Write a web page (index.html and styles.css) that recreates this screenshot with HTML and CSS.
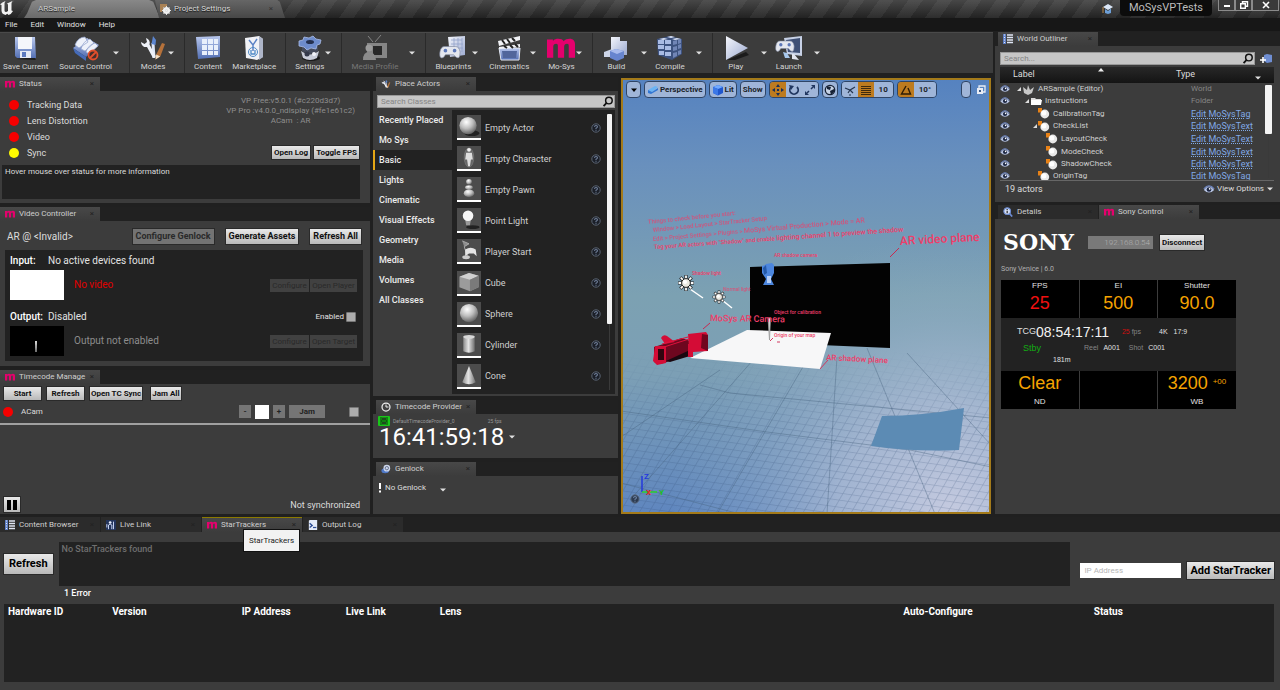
FILE: index.html
```html
<!DOCTYPE html>
<html lang="en">
<head>
<meta charset="utf-8">
<title>ARSample - Unreal Editor</title>
<meta name="viewport" content="width=device-width, initial-scale=1">
<link rel="stylesheet" href="styles.css">
</head>
<body>
<svg class="defs" aria-hidden="true">
  <defs>
    <linearGradient id="gBlue" x1="0" y1="0" x2="0" y2="1"><stop offset="0" stop-color="#b9c8ee"/><stop offset="1" stop-color="#5470b4"/></linearGradient>
    <linearGradient id="gPale" x1="0" y1="0" x2="1" y2="1"><stop offset="0" stop-color="#f4f6fc"/><stop offset="1" stop-color="#9caad0"/></linearGradient>
    <linearGradient id="gCyl" x1="0" y1="0" x2="1" y2="0"><stop offset="0" stop-color="#8a8a8a"/><stop offset=".45" stop-color="#e4e4e4"/><stop offset="1" stop-color="#6e6e6e"/></linearGradient>
    <radialGradient id="gBall" cx=".4" cy=".3" r=".75"><stop offset="0" stop-color="#ffffff"/><stop offset=".5" stop-color="#bdbdbd"/><stop offset="1" stop-color="#595959"/></radialGradient>
    <symbol id="m" viewBox="0 0 26 18"><path fill="#e5006d" d="M0 1h5.500v1.400C7 1 8.500.5 10.500.5c2.300 0 4 .7 5 2.300C17 1.200 18.800.5 21 .5c3.200 0 5 2 5 5.200V18h-5.800V7.200c0-1.500-.4-2.200-1.600-2.200-1.700 0-2.700 1-2.700 2.800V18h-5.800V7.200C10.100 5.700 9.600 5 8.500 5 6.800 5 5.800 6 5.800 7.800V18H0z"/></symbol>
    <symbol id="caret" viewBox="0 0 8 8"><path fill="#e0e0e0" d="M1 2.500h6L4 5.500z"/></symbol>
    <symbol id="search" viewBox="0 0 12 12"><circle cx="7" cy="5" r="3.600" fill="none" stroke="#111" stroke-width="1.600"/><path d="M4.500 7.500L1.200 11" stroke="#111" stroke-width="2"/></symbol>
    <symbol id="eye" viewBox="0 0 10 8"><path d="M.4 4.400Q5-2 9.600 4.400 5 9 .4 4.400z" fill="#b8c5e4"/><circle cx="5" cy="4" r="2.100" fill="#1c2540"/><circle cx="5.600" cy="3.400" r=".8" fill="#fff"/><path d="M.4 3.400Q5-2 9.600 3.400" fill="none" stroke="#6d86c4"/></symbol>
    <symbol id="actor" viewBox="0 0 12 11"><rect x="0" y="0" width="4" height="4.500" fill="#e88217"/><circle cx="6.800" cy="6" r="4.400" fill="#e8e8e8"/><circle cx="5.800" cy="5" r="2.500" fill="#fff"/></symbol>
    <symbol id="help" viewBox="0 0 10 10"><circle cx="5" cy="5" r="4.200" fill="#1b1f28" stroke="#5a6472"/><path d="M3.500 3.900Q3.600 2.500 5 2.500T6.500 3.800Q6.500 4.600 5 5.300V6M5 6.800v1" fill="none" stroke="#71809a" stroke-width="1.100"/></symbol>
    <symbol id="tools" viewBox="0 0 28 26"><path d="M15 23L14 8" stroke="#dfe6f5" stroke-width="3"/><path d="M12.500 9L14 1l3 4-.5 5z" fill="#5b85d0"/><path d="M2 7a5 5 0 0 0 6 5l6 11 3-1.500L10.500 9.500A5 5 0 0 0 7 3l1 4-2.500 2z" fill="#eef1f8"/><path d="M17 20l6-12 3 1-4.500 12-5 3.500z" fill="#b5713a"/><path d="M16.500 24.500l.8-5 4 2z" fill="#f3dfc4"/></symbol>
    <symbol id="pad" viewBox="0 0 24 14"><path d="M6 1Q2 1 1 7T3 13.500Q5 14 7 10h9q3 4 5 3.500T23 7Q22 1 18 1z" fill="#e3e6ee" stroke="#7d879e" stroke-width=".7"/><circle cx="7" cy="5.500" r="2" fill="#5c77b8"/><circle cx="17" cy="5.500" r="2" fill="#5c77b8"/></symbol>
    <symbol id="list" viewBox="0 0 10 10"><path d="M0 0h3v10H0z" fill="#5f7fc6"/><path d="M4 1h6M4 3.500h6M4 6h6M4 8.500h6" stroke="#dfe5f4" stroke-width="1.300"/><path d="M1 1h1M1 3.500h1M1 6h1M1 8.500h1" stroke="#e8edf8"/></symbol>
  </defs>
</svg>

<div class="app">
  <header class="titlebar">
    <svg class="ue-logo" viewBox="0 0 14 16"><path fill="#f2f2f2" d="M0 4.500Q2 2 5.500 1L4.500 3v7.500q0 1.500 1.800 1.500l1.700-1V4.500L7 3.500 12.500 1l-1 2v7.500l1.500.5Q11.500 14 8.500 15l-1.200-1.200L5.500 15Q1.500 14 1.500 10.500V5z"/></svg>
    <a class="wtab wtab-active" href="#level">ARSample</a>
    <a class="wtab wtab-settings" href="#project"><svg viewBox="0 0 12 12"><path d="M1 1h7v3H5l-2 5H1z" fill="#a98256"/><circle cx="7.500" cy="7.500" r="2.600" fill="none" stroke="#f0f0f0" stroke-width="2"/><path d="M7.500 3v9M3 7.500h9M4.500 4.500l6 6M10.500 4.500l-6 6" stroke="#f0f0f0" stroke-width=".9"/></svg>Project Settings<span class="wtab-x">×</span></a>
    <div class="title-right">
      <svg class="cap" viewBox="0 0 12 12"><path d="M1 4l5-3 5 3-5 3z" fill="#dbe6f6"/><path d="M3 6v4l3 1 3-1V5.500L6 8z" fill="#6ea0d8"/><path d="M1 4v6" stroke="#b98a4c"/></svg>
      <span class="project">MoSysVPTests</span>
      <div class="winbtns">
        <button aria-label="Minimize"><svg viewBox="0 0 10 8"><path d="M2 5h6" stroke="#fff" stroke-width="2"/></svg></button>
        <button aria-label="Restore"><svg viewBox="0 0 10 8"><path d="M3.500 2V.7h5v4.600H7M1.700 2.700h4.600v4.600H1.700z" fill="none" stroke="#fff" stroke-width="1.400"/></svg></button>
        <button aria-label="Close"><svg viewBox="0 0 10 8"><path d="M2 1l6 6M8 1L2 7" stroke="#fff" stroke-width="1.600"/></svg></button>
      </div>
    </div>
  </header>

  <nav class="menubar">
    <button>File</button><button>Edit</button><button>Window</button><button>Help</button>
  </nav>

  <main class="workspace">
    <div class="main-left">
      <div class="toolbar">
        <div class="tgroup tgroup-first">
          <button class="tool"><svg viewBox="0 0 28 26"><path d="M4 24l20 1-2-3z" fill="#1d1d1d"/><path d="M3 2h20l1 21H5l-2-2z" fill="url(#gBlue)"/><path d="M6 2h14v12H6z" fill="#f4f6fb"/><path d="M8 16h11v7H8z" fill="#e4e9f5"/><path d="M10 17h4v5h-4z" fill="#5b79bf"/></svg>Save Current</button>
          <button class="tool"><svg viewBox="0 0 28 26"><path d="M1 13L15 3l12 7-13 12z" fill="url(#gBlue)"/><path d="M3 10Q6 2 13 2l3 5-9 6zM9 14Q11 6 18 4l4 4-9 8zM14 17Q16 10 23 8l3 3-9 8z" fill="#edf1fa" stroke="#8fa0cc" stroke-width=".7"/><path d="M1 13l13 9v4L3 18z" fill="#456bb9"/><circle cx="21" cy="20" r="4.500" fill="#44302d" stroke="#e34f2c" stroke-width="1.800"/><path d="M18 23l6-6" stroke="#e34f2c" stroke-width="1.800"/></svg>Source Control</button>
          <svg class="caret"><use href="#caret"/></svg>
        </div>
        <div class="tgroup">
          <button class="tool"><svg><use href="#tools"/></svg>Modes</button><svg class="caret"><use href="#caret"/></svg>
        </div>
        <div class="tgroup gap-tools">
          <button class="tool"><svg viewBox="0 0 28 26"><path d="M2 2l24-1v21L4 24z" fill="url(#gBlue)"/><path d="M8 4h5v5H8zM14 4h5v5h-5zM20 4h4v5h-4zM8 10h5v5H8zM14 10h5v5h-5zM20 10h4v5h-4zM8 16h5v4H8zM14 16h5v4h-5zM20 16h4v4h-4z" fill="#e9effb"/></svg>Content</button>
          <button class="tool"><svg viewBox="0 0 28 26"><path d="M5 3l14-2 4 3v18l-6 3-11-2z" fill="#f1f2f6"/><path d="M19 1l4 3v18l-4 3z" fill="#aeb5c8"/><path d="M9 5l4 5 4-6M13 10v6" fill="none" stroke="#5c83c5" stroke-width="1.500"/><circle cx="13" cy="17" r="4.500" fill="none" stroke="#4f8ac7"/><path d="M11 15v4h4v-4" fill="none" stroke="#4f8ac7" stroke-width="1.300"/></svg>Marketplace</button>
        </div>
        <div class="tgroup">
          <button class="tool"><svg viewBox="0 0 28 26"><ellipse cx="15" cy="23" rx="9" ry="3" fill="#191919"/><path d="M5 16q9 7 18 0l-2 7q-7 4-14 0z" fill="#c9cdd9"/><path d="M6 11q8 6 16 0v5q-8 6-16 0z" fill="#454b5b"/><path d="M3 6l4-1 1-3 5 1 4-2 3 3 5 1-1 4-3 1-1 4-5-1-4 2-3-3-5-1z" fill="#6e8ccb" stroke="#a9bce8" stroke-width=".8"/><ellipse cx="14" cy="7" rx="4" ry="2" fill="#24304e"/><circle cx="11" cy="19" r="2.500" fill="#34394a"/><circle cx="18" cy="19" r="2" fill="#f2f4f9"/></svg>Settings</button><svg class="caret"><use href="#caret"/></svg>
        </div>
        <div class="tgroup caret-wide">
          <button class="tool" disabled><svg viewBox="0 0 28 26"><path d="M7 1l5 6M20 0l-6 7" stroke="#858585"/><path d="M6 8h20v15H6z" fill="#858585"/><path d="M12 11h9v9h-9z" fill="#282828"/><circle cx="8" cy="13" r="3.500" fill="#9b9b9b"/><path d="M2 25q0-8 6-8t7 8z" fill="#8b8b8b"/></svg>Media Profile</button><svg class="caret"><use href="#caret"/></svg>
        </div>
        <div class="tgroup gap-tools">
          <button class="tool"><svg viewBox="0 0 28 26"><path d="M9 2l17-1v19L11 22z" fill="url(#gPale)"/><path d="M12 5h11M12 9h12M12 13h12M15 3v14M19 3v14M23 3v14" stroke="#92a2ca" stroke-width=".8"/><use href="#pad" x="0" y="10" width="22" height="14"/></svg>Blueprints</button><svg class="caret"><use href="#caret"/></svg>
          <button class="tool"><svg viewBox="0 0 28 26"><path d="M4 13h21l-1 12H6z" fill="url(#gBlue)" stroke="#e5e9f3"/><path d="M7 16h15l-1 7H8z" fill="#51669b"/><path d="M3 6L25 1v4L4 11zM4 12l21-3v3L4 14z" fill="#f1f2f6"/><path d="M7 5l3 4M12 4l3 4M17 3l3 3M9 11l3 2M15 10l3 3M20 9l3 3" stroke="#222" stroke-width="2"/></svg>Cinematics</button><svg class="caret"><use href="#caret"/></svg>
          <button class="tool"><svg><use href="#m"/></svg>Mo-Sys</button><svg class="caret"><use href="#caret"/></svg>
        </div>
        <div class="tgroup gap-tools caret-wide">
          <button class="tool"><svg viewBox="0 0 28 26"><path d="M9 2h9v16H9zM18 6h7v14h-7z" fill="url(#gPale)"/><path d="M2 17l8-3 5 3v5H2z" fill="#cdd5e8"/><path d="M8 16l6-2 8 2v7l-7 3-7-3z" fill="#6785cf"/><path d="M8 16l6-2 8 2-7 3z" fill="#a8bbed"/></svg>Build</button><svg class="caret"><use href="#caret"/></svg>
          <button class="tool"><svg viewBox="0 0 28 26"><path d="M1 4l13-3 12 3v15l-10 6L2 20z" fill="#3d527f"/><path d="M2 5h6v4H2zM9 5h6v4H9zM2 10h6v4H2zM9 11h6v4H9zM3 16h5v4H3zM9 17h6v4H9z" fill="#a9bbe3"/><path d="M17 6l4-1v4l-4 1zM22 5l3-1v4l-3 1zM17 12l4-1v4l-4 1zM22 10l3-1v4l-3 1zM17 18l4-1v4l-4 2zM22 16l3-1v4l-3 1z" fill="#7185b6"/><path d="M3 4l5-1 4 1-5 1zM11 2l4-1 4 1-4 1zM16 4l5-1 4 1-6 1z" fill="#dbe3f6"/></svg>Compile</button><svg class="caret"><use href="#caret"/></svg>
        </div>
        <div class="tgroup tgroup-last gap-tools caret-wide">
          <button class="tool"><svg viewBox="0 0 28 26"><path d="M5 25l19-8 3 3-14 5z" fill="#1b1b1b"/><path d="M4 1l22 12L4 25z" fill="url(#gPale)"/></svg>Play</button><svg class="caret"><use href="#caret"/></svg>
          <button class="tool"><svg viewBox="0 0 28 26"><path d="M9 3l18-2v20l-15-2z" fill="#c7d1e6"/><path d="M11 5l14-2v15l-12-1z" fill="#3f5075"/><path d="M17 19v5l7 1-5-6z" fill="#e3e6ef"/><use href="#pad" x="0" y="5" width="20" height="12"/><path d="M8 17l4 1 3 5h-5z" fill="#a8c8ec"/></svg>Launch</button><svg class="caret"><use href="#caret"/></svg>
        </div>
      </div>

      <div class="columns">
        <div class="col col-a">
          <section class="dock">
            <div class="tabs"><a class="tab" href="#status"><svg><use href="#m"/></svg>Status<i>×</i></a></div>
            <div class="panel status">
              <div class="status-top">
                <ul class="lights"><li><b class="dot"></b>Tracking Data</li><li><b class="dot"></b>Lens Distortion</li><li><b class="dot"></b>Video</li><li><b class="dot dot-yellow"></b>Sync</li></ul>
                <div class="status-side">
                  <p>VP Free:v5.0.1 (#c220d3d7)<br>VP Pro :v4.0.0_ndisplay (#fe1e61c2)<br>ACam&nbsp; : AR</p>
                  <div class="btnrow"><button class="btn">Open Log</button><button class="btn">Toggle FPS</button></div>
                </div>
              </div>
              <div class="hint">Hover mouse over status for more information</div>
            </div>
          </section>

          <section class="dock">
            <div class="tabs"><a class="tab" href="#video"><svg><use href="#m"/></svg>Video Controller<i>×</i></a></div>
            <div class="panel video">
              <div class="video-head"><span class="device">AR @ &lt;Invalid&gt;</span><button class="btn btn-9 btn-dim" disabled>Configure Genlock</button><button class="btn btn-9">Generate Assets</button><button class="btn btn-9">Refresh All</button></div>
              <div class="video-box">
                <div class="io-line"><strong>Input:</strong><span>No active devices found</span></div>
                <div class="io-body"><div class="thumb thumb-white"></div><span class="red">No video</span><div class="io-btns"><button disabled>Configure</button><button disabled>Open Player</button></div></div>
                <div class="io-line"><strong>Output:</strong><span>Disabled</span><label class="enabled">Enabled<input type="checkbox" class="check"></label></div>
                <div class="io-body"><div class="thumb"><svg viewBox="0 0 54 30"><path d="M25 15h2l-.5 11h-1z" fill="#d8d8d8"/></svg></div><span class="grey">Output not enabled</span><div class="io-btns"><button disabled>Configure</button><button disabled>Open Target</button></div></div>
              </div>
            </div>
          </section>

          <section class="dock dock-grow">
            <div class="tabs"><a class="tab" href="#timecode"><svg><use href="#m"/></svg>Timecode Manage<i>×</i></a></div>
            <div class="panel tcm">
              <div class="tcm-btns"><button class="btn wide">Start</button><button class="btn wide">Refresh</button><button class="btn">Open TC Sync</button><button class="btn last">Jam All</button></div>
              <div class="tcm-row"><b class="dot"></b><label for="jamval">ACam</label><button class="sq">-</button><input id="jamval" type="text"><button class="sq">+</button><button class="jam">Jam</button><input type="checkbox" class="check" aria-label="Select ACam"></div>
              <div class="tcm-foot"><button class="btn pause" aria-label="Pause"><svg viewBox="0 0 12 12"><path d="M1 1h4v10H1zM7 1h4v10H7z"/></svg></button><span>Not synchronized</span></div>
            </div>
          </section>
        </div>

        <div class="col col-b">
          <section class="dock dock-grow">
            <div class="tabs tabs-in"><a class="tab" href="#place"><svg viewBox="0 0 28 26"><use href="#tools"/></svg>Place Actors<i>×</i></a></div>
            <div class="panel place">
              <div class="search"><input type="text" placeholder="Search Classes" aria-label="Search Classes"><svg><use href="#search"/></svg></div>
              <div class="place-body">
                <div class="cats"><button>Recently Placed</button><button>Mo Sys</button><button class="on">Basic</button><button>Lights</button><button>Cinematic</button><button>Visual Effects</button><button>Geometry</button><button>Media</button><button>Volumes</button><button>All Classes</button></div>
                <div class="assets">
                  <ul>
                    <li><svg class="th" viewBox="0 0 24 24"><ellipse cx="15" cy="19" rx="8" ry="3" fill="#222"/><circle cx="11" cy="11" r="9" fill="url(#gBall)"/></svg>Empty Actor<svg class="q"><use href="#help"/></svg></li>
                    <li><svg class="th" viewBox="0 0 24 24"><ellipse cx="12" cy="12" rx="5" ry="10" fill="#666" stroke="#888" stroke-width=".5"/><circle cx="12" cy="4" r="2" fill="#eee"/><path d="M9 7h6l1 7h-2l-1 7h-2l-1-7H8z" fill="#ddd"/></svg>Empty Character<svg class="q"><use href="#help"/></svg></li>
                    <li><svg class="th" viewBox="0 0 24 24"><circle cx="12" cy="5" r="3" fill="url(#gBall)"/><ellipse cx="12" cy="11" rx="4" ry="2.500" fill="url(#gBall)"/><ellipse cx="12" cy="17" rx="5.500" ry="4" fill="url(#gBall)"/></svg>Empty Pawn<svg class="q"><use href="#help"/></svg></li>
                    <li><svg class="th" viewBox="0 0 24 24"><ellipse cx="16" cy="20" rx="7" ry="2" fill="#222"/><path d="M8 12h6l-1 6h-4z" fill="#999"/><circle cx="11" cy="8" r="5.500" fill="#f7f7f7"/></svg>Point Light<svg class="q"><use href="#help"/></svg></li>
                    <li><svg class="th" viewBox="0 0 24 24"><path d="M5 2l7 3-5 3 4 12" fill="#8d8d8d" stroke="#aaa"/><path d="M8 11q6-4 11 0l1 7-3-3h-5l-4 3z" fill="#e4e4e4"/><ellipse cx="9" cy="19" rx="4" ry="2" fill="#ccc"/></svg>Player Start<svg class="q"><use href="#help"/></svg></li>
                    <li><svg class="th" viewBox="0 0 24 24"><path d="M2 6l10-4 10 3v12l-9 4-11-4z" fill="#9b9b9b"/><path d="M2 6l10-4 10 3-9 4z" fill="#d0d0d0"/><path d="M13 9l9-4v12l-9 4z" fill="#7a7a7a"/></svg>Cube<svg class="q"><use href="#help"/></svg></li>
                    <li><svg class="th" viewBox="0 0 24 24"><circle cx="12" cy="11.500" r="9.500" fill="url(#gBall)"/></svg>Sphere<svg class="q"><use href="#help"/></svg></li>
                    <li><svg class="th" viewBox="0 0 24 24"><path d="M6 4v15q6 3 12 0V4z" fill="url(#gCyl)"/><ellipse cx="12" cy="4" rx="6" ry="2" fill="#d8d8d8"/></svg>Cylinder<svg class="q"><use href="#help"/></svg></li>
                    <li><svg class="th" viewBox="0 0 24 24"><path d="M12 2l7 17q-7 4-14 0z" fill="url(#gCyl)"/></svg>Cone<svg class="q"><use href="#help"/></svg></li>
                  </ul>
                  <div class="vbar"><div class="vthumb"></div></div>
                </div>
              </div>
            </div>
          </section>
          <section class="dock">
            <div class="tabs tabs-in"><a class="tab" href="#tcp"><svg viewBox="0 0 12 12"><circle cx="6" cy="6" r="4.800" fill="none" stroke="#eee" stroke-width="1.500"/><path d="M6 3v3h3" fill="none" stroke="#eee" stroke-width="1.200"/></svg>Timecode Provider<i>×</i></a></div>
            <div class="panel tcp">
              <div class="tcp-top"><svg viewBox="0 0 12 10"><rect width="12" height="10" rx="1" fill="#19c619"/><path d="M3 1v8M9 1v8M3 5h6" stroke="#0b3d0b" stroke-width="1"/><path d="M4 1.500h4v2.500H4zM4 6h4v2.500H4z" fill="#1d4a1d"/></svg><span>DefaultTimecodeProvider_0</span><span>25 fps</span></div>
              <div class="tcp-time">16:41:59:18<svg class="caret"><use href="#caret"/></svg></div>
            </div>
          </section>
          <section class="dock">
            <div class="tabs tabs-in"><a class="tab" href="#genlock"><svg viewBox="0 0 12 12"><ellipse cx="5" cy="8" rx="4.500" ry="3" fill="#4f79c9"/><circle cx="7" cy="5" r="4" fill="#cdd6ea"/><circle cx="7" cy="5" r="2" fill="none" stroke="#55627f"/></svg>Genlock<i>×</i></a></div>
            <div class="panel genlock"><svg class="bang" viewBox="0 0 4 10"><path d="M1 0h2v6H1zM1 7.500h2v2H1z" fill="#fff"/></svg>No Genlock<svg class="caret"><use href="#caret"/></svg></div>
          </section>
        </div>

        <section class="viewport">
          <svg class="scene" viewBox="621 78 370 436" preserveAspectRatio="xMidYMid slice">
            <defs>
              <linearGradient id="sky" x1="0" y1="0" x2="0" y2="1"><stop offset="0" stop-color="#5582c0"/><stop offset=".2" stop-color="#6990bd"/><stop offset=".5" stop-color="#7ca1b2"/><stop offset=".68" stop-color="#7c9fb5"/><stop offset="1" stop-color="#5f86bf"/></linearGradient>
              <radialGradient id="glow" gradientUnits="userSpaceOnUse" cx="950" cy="515" r="280"><stop offset="0" stop-color="#c6cbe0"/><stop offset=".4" stop-color="#b0bed6" stop-opacity=".8"/><stop offset=".7" stop-color="#9db4cc" stop-opacity=".35"/><stop offset="1" stop-color="#8dabc2" stop-opacity="0"/></radialGradient>
              <pattern id="fine" width="9" height="7" patternUnits="userSpaceOnUse" patternTransform="rotate(8) skewX(-22)"><path d="M0 .5h9M.5 0v7" stroke="#2f4a70" stroke-width=".6" fill="none"/></pattern>
              <linearGradient id="fade" x1="0" y1="0" x2="0" y2="1"><stop offset="0" stop-color="#000"/><stop offset=".5" stop-color="#fff"/></linearGradient>
              <mask id="floor"><rect x="621" y="350" width="370" height="164" fill="url(#fade)"/></mask>
              <g id="sun"><g stroke="#222" stroke-width="3.200"><path d="M0-8V8M-8 0H8M-5.700-5.700L5.700 5.700M5.700-5.700L-5.700 5.700"/></g><g stroke="#fff" stroke-width="1.800"><path d="M0-7.500V7.500M-7.500 0H7.500M-5.300-5.300L5.300 5.300M5.300-5.300L-5.300 5.300"/></g><circle r="4.400" fill="#e8e8e0" stroke="#222"/><circle r="2" cx="-1" cy="-1" fill="#fff"/></g>
            </defs>
            <rect x="621" y="78" width="370" height="436" fill="url(#sky)"/>
            <rect x="621" y="235" width="370" height="279" fill="url(#glow)"/>
            <rect x="621" y="350" width="370" height="164" fill="url(#fine)" opacity=".3" mask="url(#floor)"/>
            <g fill="none" stroke="#46617c" stroke-width=".8" opacity=".5"><path d="M837 357L827 514M807 360L717 514M753 360L630 500M867 348L935 514M907 353L991 445M720 370L621 437M621 411L767 432 910 450 991 467M700 385L730 393 991 418M621 483L740 514"/></g>
            <path d="M882 416q40 0 82-8l-5 42q-46 2-88-4z" fill="#5c8bb4"/>
            <path d="M750 267L890 263V348L750 342z" fill="#030303"/>
            <path d="M747 330L831 333 820 369 690 358z" fill="#f7f7f8"/>
            <path d="M820 369l8-9" stroke="#d33a60"/>
            <g fill="#d40c36"><path d="M654 347l28-9 8 3v13l-26 9q-9 2-10-2z" fill="#6e071f"/><path d="M655 346h11v17l-9 2-4-4z"/><path d="M658 349h6v11h-6z" fill="#31050f"/><path d="M688 334l18-2 2 3v16l-15 1-4-5z"/><path d="M702 334l6 1v16l-7-3z" fill="#71051e"/><path d="M661 338q2-4 6-2l8 6-10 2z"/><path d="M666 361l24-11v6l-20 6z" fill="#1a0810"/><path d="M688 344h5v13h-5z"/></g>
            <path d="M662 344l26-7M664 347l25-8" stroke="#e0113c" stroke-width="1"/>
            <path d="M768 318l1.500 22 1-22z" fill="#ddd" stroke="#999" stroke-width=".8"/><path d="M770 341l3-3M777 342h3" stroke="#d33a60"/>
            <path d="M703 329l7-6M890 257l9-9" stroke="#c8284f"/>
            <g fill="#4c86de"><path d="M766 264l6-1 2 2v8l-3 6 3 6h-11l3-6-4-6v-7l3-1z"/><path d="M767 276h4v7h-4z" fill="#b5cef7"/><path d="M763 268l3-3 1 8-3 2z" fill="#2459a8"/></g>
            <path d="M690 289l13 9M722 300l10 8" stroke="#fff" stroke-width="1.500"/>
            <use href="#sun" x="686" y="283"/><use href="#sun" x="719" y="297" transform="translate(719 297) scale(.8) translate(-719 -297)"/>
            <g class="scene-text">
              <text class="s6 soft" x="648" y="224" transform="rotate(-6 648 224)">Things to check before you start:</text>
              <text class="s6 soft" x="653" y="232" transform="rotate(-6 653 232)">Window &gt; Load Layout &gt; StarTracker Setup</text>
              <text class="s6 soft" x="653" y="241" transform="rotate(-5 653 241)">Edit &gt; Project Settings &gt; Plugins &gt; <tspan class="s7">MoSys Virtual Production &gt; Mode = AR</tspan></text>
              <text class="s6" x="654" y="249" transform="rotate(-4 654 249)">Tag your AR actors with "Shadow" and enable <tspan class="s7">lighting channel 1 to preview the shadow</tspan></text>
              <text class="s12" x="900" y="245" transform="rotate(-3 900 245)">AR video plane</text>
              <text class="s5" x="774" y="257">AR shadow camera</text>
              <text class="s5" x="692" y="275">Shadow light</text>
              <text class="s5 soft" x="723" y="291">Normal light</text>
              <text class="s5" x="774" y="314">Object for calibration</text>
              <text class="s9" x="710" y="321" transform="rotate(1 710 321)">MoSys AR Camera</text>
              <text class="s5" x="774" y="337">Origin of your map</text>
              <text class="s8" x="826" y="360" transform="rotate(3 826 360)">AR shadow plane</text>
            </g>
            <g class="axes"><path d="M642 492v-16" stroke="#2338dd" stroke-width="1.500"/><path d="M642 492h15" stroke="#2bd22b" stroke-width="1.500"/><text x="644" y="479" fill="#2338dd">Z</text><text x="646" y="495" fill="#e02525">X</text><text x="659" y="495" fill="#18c418">Y</text></g>
            <use href="#help" x="630" y="494" width="10" height="10" opacity=".7"/>
          </svg>
          <div class="vp-bar">
            <button class="chip" aria-label="Viewport options"><svg viewBox="0 0 8 8"><path d="M1 2.500h6l-3 3.500z"/></svg></button>
            <button class="chip"><svg viewBox="0 0 12 10"><path d="M1 5l7-4 3 1-6 5z" fill="#69b4f5"/><path d="M1 5l4 2 6-4v2L4 9 1 8z" fill="#3177d4"/></svg>Perspective</button>
            <button class="chip"><svg viewBox="0 0 12 12"><path d="M1 3l5-2 5 2v6l-5 2.500L1 9z" fill="#2057cd"/><path d="M1 3l5 2 5-2-5-2z" fill="#72a9ff"/><path d="M1 3l5 2v6.500L1 9z" fill="#3b78e8"/></svg>Lit</button>
            <button class="chip">Show</button>
            <div class="chip-group"><button class="chip on" aria-label="Move"><svg viewBox="0 0 12 12"><path d="M6 0l2 3H4zM6 12l2-3H4zM0 6l3-2v4zM12 6L9 4v4zM5 5h2v2H5z" fill="#172e59"/></svg></button><button class="chip" aria-label="Rotate"><svg viewBox="0 0 12 12"><path d="M3 3a4.200 4.200 0 1 0 6 0" fill="none" stroke="#20365f" stroke-width="1.800"/><path d="M1 1l5 1-3 4z" fill="#20365f"/></svg></button><button class="chip" aria-label="Scale"><svg viewBox="0 0 12 12"><path d="M7 1h4v4zM1 7v4h4z" fill="#20365f"/><path d="M3 9l2-2M7 5l2-2" stroke="#20365f" stroke-width="1.500"/></svg></button></div>
            <button class="chip" aria-label="World space"><svg viewBox="0 0 12 12"><circle cx="6" cy="6" r="4.700" fill="#c6d2e4" stroke="#172236" stroke-width="1.300"/><path d="M3 2l4 1-1 3-3-1zM6 7l4-2v3l-3 3z" fill="#172236"/></svg></button>
            <div class="chip-group"><button class="chip" aria-label="Surface snap"><svg viewBox="0 0 12 12"><path d="M1 4l5 2 5-3M6 6l-2 3M6 6l3 3M5 11h2" stroke="#26364f" fill="none" stroke-width="1.200"/></svg></button><button class="chip on" aria-label="Grid snap"><svg viewBox="0 0 12 12"><path d="M1 2.500h10M1 4.500h10M1 6.500h10M1 8.500h10M1 10.500h10" stroke="#3d2a0e" stroke-width="1.200"/></svg></button><button class="chip num">10</button></div>
            <div class="chip-group"><button class="chip on" aria-label="Angle snap"><svg viewBox="0 0 12 12"><path d="M6 2L1.500 10h9L8 4" fill="none" stroke="#2d1d06" stroke-width="1.400"/></svg></button><button class="chip num">10°</button></div>
            <button class="chip pill" aria-label="Camera speed"></button>
            <button class="maxi" aria-label="Maximize"><svg viewBox="0 0 10 10"><path d="M3 3V1h6v6H7" fill="none" stroke="#e9edf5" stroke-width="1.300"/><path d="M1 3h6v6H1z" fill="#e9edf5"/><path d="M3 5h2v2H3z" fill="#3c5a86"/></svg></button>
          </div>
        </section>
      </div>
    </div>

    <aside class="main-right">
      <section class="dock">
        <div class="tabs tabs-in"><a class="tab" href="#outliner"><svg><use href="#list"/></svg>World Outliner<i>×</i></a></div>
        <div class="panel outliner">
          <div class="ol-search"><div class="search"><input type="text" placeholder="Search..." aria-label="Search"><svg><use href="#search"/></svg></div><button aria-label="New folder"><svg viewBox="0 0 12 12"><path d="M4 2l3-1 5 1v7l-5 1-3-2z" fill="#6f8ed2"/><path d="M3 4v6M0 7h6" stroke="#fff" stroke-width="1.600"/></svg></button></div>
          <div class="ol-head"><span>Label</span><svg class="up" viewBox="0 0 8 6"><path d="M1 4.500h6L4 1z" fill="#eee"/></svg><span class="ty">Type</span><svg class="caret"><use href="#caret"/></svg></div>
          <div class="ol-list">
            <table>
              <tr><td><svg><use href="#eye"/></svg></td><td class="l0"><svg class="tri" viewBox="0 0 6 6"><path d="M5 1v4H1z"/></svg><svg class="ico" viewBox="0 0 12 11"><path d="M1 3l4 3 1-5 2 5 4-3-2 6-4 2-4-2z" fill="#c8c8c8"/></svg>ARSample (Editor)</td><td>World</td></tr>
              <tr><td><svg><use href="#eye"/></svg></td><td class="l1"><svg class="tri" viewBox="0 0 6 6"><path d="M5 1v4H1z"/></svg><svg class="ico" viewBox="0 0 12 11"><path d="M1 2h4l1 1h5v2H4L2 9H1z" fill="#ddd"/><path d="M1 4h11l-1 5H1z" fill="#fff"/></svg>Instructions</td><td>Folder</td></tr>
              <tr class="a"><td><svg><use href="#eye"/></svg></td><td class="l2"><svg class="ico"><use href="#actor"/></svg>CalibrationTag</td><td><a href="#tag">Edit MoSysTag</a></td></tr>
              <tr><td><svg><use href="#eye"/></svg></td><td class="l2 open"><svg class="tri" viewBox="0 0 6 6"><path d="M5 1v4H1z"/></svg><svg class="ico"><use href="#actor"/></svg>CheckList</td><td><a href="#text">Edit MoSysText</a></td></tr>
              <tr class="a"><td><svg><use href="#eye"/></svg></td><td class="l3"><svg class="ico"><use href="#actor"/></svg>LayoutCheck</td><td><a href="#text">Edit MoSysText</a></td></tr>
              <tr class="a"><td><svg><use href="#eye"/></svg></td><td class="l3"><svg class="ico"><use href="#actor"/></svg>ModeCheck</td><td><a href="#text">Edit MoSysText</a></td></tr>
              <tr><td><svg><use href="#eye"/></svg></td><td class="l3"><svg class="ico"><use href="#actor"/></svg>ShadowCheck</td><td><a href="#text">Edit MoSysText</a></td></tr>
              <tr><td><svg><use href="#eye"/></svg></td><td class="l2"><svg class="ico"><use href="#actor"/></svg>OriginTag</td><td><a href="#tag">Edit MoSysTag</a></td></tr>
            </table>
            <div class="vbar"><div class="vthumb"></div></div>
          </div>
          <div class="ol-foot"><span>19 actors</span><button><svg class="eye"><use href="#eye"/></svg>View Options<svg class="caret"><use href="#caret"/></svg></button></div>
        </div>
      </section>
      <section class="dock dock-grow">
        <div class="tabs tabs-in"><a class="tab off" href="#details"><svg viewBox="0 0 12 12"><circle cx="5" cy="5" r="4" fill="#d5def2" stroke="#6c8bd0" stroke-width="1.300"/><path d="M8 8l3 3.500" stroke="#6c8bd0" stroke-width="2"/><path d="M5 2.500v1M5 4.500v3" stroke="#222" stroke-width="1.400"/></svg>Details<i>×</i></a><a class="tab" href="#sony"><svg><use href="#m"/></svg>Sony Control<i>×</i></a></div>
        <div class="panel sony">
          <div class="sony-top"><span class="brand">SONY</span><input type="text" value="192.168.0.54" aria-label="Camera address" disabled><button class="btn btn-disc">Disconnect</button></div>
          <div class="model">Sony Venice | 6.0</div>
          <div class="cam">
            <div class="cell"><small>FPS</small><b class="r">25</b></div><div class="cell"><small>EI</small><b>500</b></div><div class="cell"><small>Shutter</small><b>90.0</b></div>
            <div class="cam-mid">
              <div class="mid-1"><span class="tcg">TCG</span><span class="tc">08:54:17:11</span><span class="f"><em>25</em> fps</span><span class="w">4K</span><span class="w">17:9</span></div>
              <div class="mid-2"><span class="stby">Stby</span><span class="g">Reel</span><span>A001</span><span class="g">Shot</span><span>C001</span></div>
              <div class="mid-3">181m</div>
            </div>
            <div class="cell"><b>Clear</b><small>ND</small></div><div class="cell"></div><div class="cell"><b>3200 <sup>+00</sup></b><small>WB</small></div>
          </div>
        </div>
      </section>
    </aside>
  </main>

  <section class="bottom">
    <div class="tabs">
      <a class="tab off" href="#content"><svg><use href="#list"/></svg>Content Browser<i>×</i></a>
      <a class="tab off" href="#livelink"><svg viewBox="0 0 12 12"><rect width="12" height="12" fill="#23345c"/><circle cx="5" cy="3" r="1.600" fill="#e9eefb"/><path d="M3 11V6l2-1 2 1v5M9 2v9M1 5v4" stroke="#c3d0ef" fill="none" stroke-width="1.200"/></svg>Live Link<i>×</i></a>
      <a class="tab hot" href="#startrackers"><svg><use href="#m"/></svg>StarTrackers<i>×</i><span class="tip" role="tooltip">StarTrackers</span></a>
      <a class="tab off" href="#log"><svg viewBox="0 0 12 12"><path d="M2 0h9v12H1V1z" fill="#e3eaf8"/><path d="M2 4l3 2.500L2 9" fill="none" stroke="#2b4c94" stroke-width="1.600"/><path d="M6 9h4" stroke="#2b4c94" stroke-width="1.500"/></svg>Output Log<i>×</i></a>
    </div>
    <div class="panel trackers">
      <div class="tr-top">
        <button class="btn btn-11">Refresh</button>
        <div class="tr-log">No StarTrackers found</div>
        <div class="tr-add"><input type="text" placeholder="IP Address" aria-label="IP Address"><button class="btn btn-11">Add StarTracker</button></div>
      </div>
      <div class="err">1 Error</div>
      <div class="tr-table">
        <table><thead><tr><th class="c1">Hardware ID</th><th class="c2">Version</th><th class="c3">IP Address</th><th class="c4">Live Link</th><th class="c5">Lens</th><th class="c6">Auto-Configure</th><th>Status</th></tr></thead></table>
      </div>
    </div>
  </section>
</div>
</body>
</html>
```

FILE: styles.css
```css
* { box-sizing: border-box; }
body { margin: 0; background: #202020; color: #dcdcdc; font: 8px/12px Roboto, "Noto Sans", sans-serif; }
button, input { font: inherit; color: inherit; margin: 0; padding: 0; border: 0; background: none; border-radius: 0; }
button { cursor: pointer; white-space: nowrap; }
a { color: inherit; text-decoration: none; }
ul { list-style: none; margin: 0; padding: 0; }
p { margin: 0; }
svg { display: block; flex: none; }
.defs { position: absolute; width: 0; height: 0; }
.app { min-height: 100vh; display: flex; flex-direction: column; }

/* title bar */
.titlebar { display: flex; height: 18px; background: repeating-linear-gradient(125deg, rgba(255,255,255,.05) 0 12px, transparent 12px 24px), linear-gradient(#474747, #222); }
.ue-logo { width: 14px; height: 16px; margin-right: 10px; }
.wtab { display: flex; align-items: center; height: 18px; text-shadow: 0 1px 1px #111; }
.wtab-active { width: 136px; padding-left: 14px; color: #d0d0d0; background: linear-gradient(#888, #6a6a6a); clip-path: polygon(0 100%, 3px 75%, 8px 10%, 12px 0, 92% 0, 95% 10%, 100% 100%); }
.wtab-settings { width: 130px; margin-left: -5px; padding-left: 4px; gap: 3px; color: #d8d8d8; background: linear-gradient(#666, #474747); clip-path: polygon(0 0, 94% 0, 96% 10%, 100% 100%, 4px 100%); }
.wtab-settings svg { width: 12px; height: 12px; }
.wtab-x { margin-left: auto; margin-right: 12px; color: #333; text-shadow: none; }
.title-right { margin-left: auto; display: flex; gap: 6px; }
.cap { width: 12px; height: 12px; margin-top: 3px; }
.project { height: 16px; padding: 0 9px; font-size: 11px; line-height: 16px; color: #bdbdbd; background: #0c0c0c; border-radius: 0 0 4px 4px; }
.winbtns { display: flex; height: 11px; margin-right: 1px; }
.winbtns button { width: 17px; border: 1px solid #8a8a8a; border-top: 0; background: #3a3a3a; display: grid; place-items: center; }
.winbtns button:last-child { width: 27px; }
.winbtns svg { width: 10px; height: 8px; }

.menubar { display: flex; height: 13px; padding-left: 5px; gap: 13px; background: #171717; color: #e0e0e0; }

.workspace { flex: 1; display: grid; grid-template-columns: 993fr 285fr; gap: 2px; padding-top: 1px; }
.main-left, .main-right { min-width: 0; display: flex; flex-direction: column; }

/* toolbar */
.toolbar { display: flex; height: 41px; background: #3c3c3c; border-top: 1px solid #4a4a4a; }
.tgroup { display: flex; align-items: center; padding: 0 9px; border-right: 1px solid #2a2a2a; }
.tgroup-first { padding-left: 3px; }
.tgroup-first .tool + .tool { margin-left: 11px; }
.tgroup-last { border: 0; }
.tool { display: flex; flex-direction: column; align-items: center; color: #d4d4d4; line-height: 11px; }
.tool svg { width: 28px; height: 26px; }
.tool:disabled { color: #777; }
.caret { width: 8px; height: 8px; }
.gap-tools .tool ~ .tool { margin-left: 10px; }
.caret-wide .caret { margin-left: 10px; }
.gap-tools.caret-wide .tool ~ .tool { margin-left: 7px; }

/* docks */
.columns { flex: 1; display: grid; grid-template-columns: 370fr 245fr 370fr; gap: 3px; padding: 4px 2px 0 0; }
.col { min-width: 0; display: flex; flex-direction: column; gap: 4px; }
.dock { display: flex; flex-direction: column; min-width: 0; }
.dock-grow { flex: 1; }
.tabs { display: flex; gap: 1px; background: #212121; }
.tabs-in { padding-left: 3px; }
.tab { position: relative; display: flex; align-items: center; gap: 4px; width: 100px; height: 14px; padding: 0 6px 0 5px; color: #cfcfcf; background: linear-gradient(#484848, #3c3c3c); white-space: nowrap; }
.tab svg { width: 10px; height: 10px; }
.tab i { margin-left: auto; font-style: normal; color: #222; }
.tab.off { background: #2b2b2b; }
.panel { flex: 1; background: #3c3c3c; }

.btn { font-weight: 700; color: #111; background: linear-gradient(#e9e9e9, #b9b9b9); box-shadow: 0 0 0 1px #2a2a2a; padding: 0 2px; height: 13px; line-height: 13px; }
.btn-9 { font-size: 9px; height: 15px; line-height: 15px; padding: 0 3px; }
.btn-dim { background: #737373; color: #2a2a2a; }
.btn-11 { font-size: 11px; height: 20px; line-height: 20px; padding: 0 6px; color: #000; }
.btnrow { display: flex; gap: 4px; }
.dot { width: 10px; height: 10px; border-radius: 50%; background: #f60000; }
.dot-yellow { background: #fffb00; }
.check { appearance: none; width: 10px; height: 10px; background: #acacac; border: 1px solid #777; border-radius: 1px; }

/* status */
.status { padding: 6px 10px 4px 2px; }
.status-top { display: flex; justify-content: space-between; font-size: 9px; }
.lights { padding-left: 7px; }
.lights li { display: flex; align-items: center; gap: 8px; height: 16px; }
.status-side { display: flex; flex-direction: column; align-items: flex-end; justify-content: space-between; padding: 0 1px 2px 0; }
.status-side p { text-align: center; font-size: 8px; line-height: 10px; color: #8e8e8e; padding-right: 4px; align-self: center; margin-top: -1px; }
.status-side .btnrow { font-size: 8px; }
.hint { height: 34px; margin-top: 4px; padding: 1px 3px; background: #222; font-size: 8px; }

/* video controller */
.video { padding: 8px 7px 5px 5px; }
.video-head { display: flex; align-items: center; padding: 0 2px; gap: 12px; }
.device { font-size: 10px; margin-right: auto; }
.video-box { margin-top: 6px; padding: 5px 6px 5px 5px; background: #222; font-size: 10px; color: #e2e2e2; }
.io-line { display: flex; align-items: center; height: 12px; margin-bottom: 3px; }
.io-line strong { width: 38px; color: #fff; font-weight: 500; }
.io-body { display: flex; align-items: center; gap: 10px; height: 30px; }
.io-body + .io-line { margin-top: 11px; }
.thumb { width: 54px; height: 30px; background: #000; }
.thumb-white { background: #fff; }
.red { color: #e00000; }
.grey { color: #8d8d8d; }
.enabled { margin-left: auto; display: flex; align-items: center; gap: 2px; font-size: 8px; padding-right: 1px; }
.io-btns { margin-left: auto; display: flex; gap: 1px; font-size: 8px; }
.io-btns button { width: 39px; height: 13px; background: #414141; color: #292929; line-height: 13px; }
.io-btns button:last-child { width: 47px; }

/* timecode manager */
.tcm { display: flex; flex-direction: column; padding: 3px 0 2px; }
.tcm-btns { display: flex; gap: 6px; padding-left: 4px; }
.tcm-btns .btn { padding: 0 1px; }
.tcm-btns .wide { width: 37px; }
.tcm-btns .last { margin-left: 3px; }
.tcm-row { display: flex; align-items: center; height: 25px; padding: 0 11px 0 3px; gap: 4px; border-bottom: 2px solid #a0a0a0; }
.tcm-row label { margin: 0 auto 0 4px; }
.tcm-row input[type=text] { width: 14px; height: 14px; background: #fff; color: #111; }
.tcm-row button { height: 13px; background: #757575; color: #222; font-weight: 700; }
.sq { width: 12px; }
.jam { width: 36px; }
.tcm-row .check { margin-left: 20px; }
.tcm-foot { margin-top: auto; display: flex; justify-content: space-between; align-items: center; padding: 0 10px 0 4px; font-size: 9px; }
.pause { height: 15px; }
.pause svg { width: 12px; height: 12px; }

/* place actors */
.search { display: flex; align-items: center; height: 13px; background: #c6c6c6; border: 1px solid #999; }
.search input { flex: 1; min-width: 0; padding-left: 3px; color: #222; outline: 0; }
.search input::placeholder { color: #858585; opacity: 1; }
.search svg { width: 12px; height: 11px; }
.place { display: flex; flex-direction: column; padding: 4px 3px 2px 0; }
.place .search { margin-left: 4px; }
.place-body { flex: 1; display: flex; margin-top: 2px; }
.cats { width: 79px; display: flex; flex-direction: column; }
.cats button { height: 20px; padding-left: 4px; text-align: left; font-size: 9px; font-weight: 500; color: #ececec; border-left: 2px solid transparent; }
.cats .on { background: #222; border-color: #e3a616; }
.assets { flex: 1; display: flex; background: #222; padding: 2px; }
.assets ul { flex: 1; display: flex; flex-direction: column; padding: 0 5px 0 3px; }
.assets li { flex: 1; display: flex; align-items: center; gap: 4px; font-size: 9px; color: #d0d0d0; }
.th { width: 24px; height: 25px; background: #4c4c4c; border-bottom: 2px solid #fff; }
.q { width: 10px; height: 10px; margin-left: auto; }
.vbar { width: 5px; margin: 2px 1px; background: linear-gradient(90deg, transparent 40%, #3a3a3a 40% 60%, transparent 60%); }
.vthumb { height: 76%; background: #f4f4f4; border-radius: 1px; }

.panel.tcp { flex: none; height: 44px; padding: 2px 5px; }
.tcp-top { display: flex; align-items: center; gap: 3px; height: 10px; font-size: 5px; color: #9a9a9a; }
.tcp-top svg { width: 12px; height: 10px; }
.tcp-top span:last-child { margin-left: 30px; }
.tcp-time { display: flex; align-items: center; gap: 4px; padding-left: 1px; font-size: 24px; line-height: 22px; color: #fff; }
.panel.genlock { flex: none; display: flex; align-items: flex-start; height: 38px; padding: 6px 5px; }
.bang { width: 4px; height: 10px; margin: 1px 3px 0 0; }
.genlock .caret { margin: 4px 0 0 13px; }

/* viewport */
.viewport { position: relative; border: 2px solid #a37a1a; min-width: 0; overflow: hidden; background: #7ca1b2; margin-top: 1px; }
.scene { position: absolute; inset: -2px; width: calc(100% + 4px); height: calc(100% + 4px); }
.scene-text { fill: #ee3e69; font-weight: 500; }
.soft { opacity: .75; }
.s5 { font-size: 5px; } .s6 { font-size: 6px; } .s7 { font-size: 7px; } .s8 { font-size: 8px; } .s9 { font-size: 9px; } .s12 { font-size: 12px; }
.axes { font-size: 8px; font-weight: 700; }
.vp-bar { position: relative; display: flex; gap: 3px; padding: 1px 3px; }
.chip { display: flex; align-items: center; justify-content: center; gap: 1px; height: 17px; padding: 0 2px; font-weight: 700; color: #1a1f2a; background: #9fb5d8; border: 1px solid #2f4566; border-radius: 4px; }
.chip svg { width: 12px; height: 12px; }
.chip:first-child > svg { width: 8px; height: 8px; }
.chip.on { background: #bd7b1f; }
.chip[aria-label] { padding: 0 1px; min-width: 15px; }
.chip-group { display: flex; border: 1px solid #2f4566; border-radius: 4px; overflow: hidden; height: 17px; }
.chip-group .chip { border: 0; border-radius: 0; height: 15px; min-width: 16px; }
.chip-group .chip:first-child > svg { width: 12px; height: 12px; }
.chip-group .num { padding: 0 5px; }
.pill.chip { margin-left: auto; min-width: 10px; }
.maxi svg { width: 10px; height: 10px; margin: 0 0 0 2px; }

/* outliner */
.main-right .tab { height: 14px; }
.main-right { gap: 3px; }
.outliner { padding: 6px 6px 4px 5px; }
.ol-search { display: flex; gap: 5px; }
.ol-search .search { flex: 1; }
.ol-search button { width: 14px; height: 13px; }
.ol-search button svg { width: 12px; height: 12px; }
.ol-head { display: grid; grid-template-columns: 84px 1fr 62px 20px; height: 16px; margin-top: 2px; padding-left: 13px; font-size: 9px; line-height: 15px; background: linear-gradient(#282828, #141414); }
.up { width: 8px; height: 6px; }
.ol-head .ty { margin-left: -16px; }
.ol-head .caret { margin-top: 7px; }
.ol-list { height: 98px; overflow: hidden; display: flex; align-items: flex-start; border-bottom: 1px solid #666; }
.ol-list table { flex: 1; border-collapse: collapse; table-layout: fixed; }
.ol-list td { padding: 0; height: 12px; line-height: 12px; color: #cfcfcf; }
.ol-list .a td { height: 13px; }
.ol-list td:first-child { width: 16px; }
.ol-list td:first-child svg { width: 10px; height: 8px; }
.ol-list td:nth-child(2) { display: flex; align-items: center; }
.ol-list td:last-child { width: 74px; color: #858585; }
.ol-list a { display: block; font-size: 9px; color: #80a9e6; text-decoration: underline dotted; }
.tri { width: 6px; height: 6px; fill: #ddd; }
.ico { width: 12px; height: 11px; margin-right: 3px; }
.l0 .ico { margin-right: 4px; }
.ol-list .l1 { padding-left: 8px; }
.ol-list .l2 { padding-left: 22px; }
.ol-list .l2.open { padding-left: 16px; }
.ol-list .l3 { padding-left: 30px; }
.ol-list .vbar { width: 7px; height: 93px; margin: 2px 2px 0 0; }
.ol-list .vthumb { height: 49px; }
.ol-foot { display: flex; justify-content: space-between; padding: 2px 0 3px 5px; }
.ol-foot span { font-size: 9px; }
.ol-foot button { display: flex; align-items: center; gap: 2px; }
.eye { width: 12px; height: 9px; }

/* camera */
.sony { padding: 15px 6px 10px; }
.sony-top { display: flex; align-items: center; height: 16px; gap: 7px; }
.brand { font: 700 22px/16px "DejaVu Serif", "Liberation Serif", serif; color: #fff; width: 80px; padding-left: 2px; }
.sony input { width: 65px; height: 13px; padding-right: 3px; text-align: right; background: #797979; color: #b2b2b2; font-weight: 300; }
.btn-disc { height: 15px; line-height: 15px; }
.model { margin: 13px 0 5px; font-size: 7px; color: #b0b0b0; }
.cam { width: 86%; display: grid; grid-template-columns: repeat(3, 1fr); gap: 0 1px; font-family: "Liberation Sans", sans-serif; color: #e0e0e0; }
.cell { height: 38px; background: #000; text-align: center; }
.cell small { display: block; font-size: 8px; line-height: 11px; }
.cell b { display: block; font-size: 18px; line-height: 25px; font-weight: 400; color: #f5a300; }
.cell b.r { color: #f01010; }
.cell sup { font-size: 8px; vertical-align: 5px; line-height: 0; }
.cam-mid { grid-column: 1 / -1; height: 53px; padding: 5px 0 0 16px; background: #222; font-size: 7px; }
.cam-mid > div { display: flex; align-items: center; }
.mid-1 { height: 18px; }
.tcg { font-size: 9px; margin-bottom: 3px; }
.tc { font-size: 14px; color: #f2f2f2; }
.f { margin-left: 13px; color: #858585; } .f em { font-style: normal; color: #d01010; }
.w { margin-left: 18px; } .w + .w { margin-left: 6px; }
.mid-2 { height: 14px; gap: 5px; }
.mid-2 .g { color: #858585; margin-left: 4px; }
.mid-2 .stby { color: #12ad12; font-size: 9px; margin: 0 34px 0 6px; }
.mid-3 { height: 10px; padding-left: 36px; }

/* bottom dock */
.bottom { margin-top: 3px; }
.bottom .tab { height: 15px; }
.tab.hot { border-top: 1px solid #8b7a00; }
.tip { position: absolute; z-index: 2; top: 11px; left: 41px; padding: 5px 5px; line-height: 11px; color: #222; background: #f2f2f2; border: 1px solid #111; }
.trackers { padding: 10px 6px 8px 4px; }
.tr-top { display: flex; align-items: center; gap: 6px; }
.tr-log { flex: 1; height: 44px; padding: 1px 3px; margin-right: 4px; background: #222; font-size: 9px; font-weight: 500; color: #6f6f6f; }
.tr-add { display: flex; align-items: center; gap: 6px; padding-top: 12px; }
.tr-add input { width: 101px; height: 15px; padding-left: 4px; background: #fff; color: #222; font-size: 8px; }
.tr-add input::placeholder { color: #b5b5b5; opacity: 1; }
.tr-add .btn { height: 17px; line-height: 17px; padding: 0 3px; }
.tr-top > .btn { padding: 0 5px; }
.err { padding: 1px 0 5px 60px; font-size: 9px; font-weight: 500; color: #fff; }
.tr-table { height: 78px; background: #222; }
.tr-table table { width: 100%; border-collapse: collapse; table-layout: fixed; }
.tr-table th { padding: 2px 4px; text-align: left; font-size: 10px; font-weight: 700; color: #fff; }
.c1 { width: 8.2%; } .c2 { width: 10.2%; } .c3 { width: 8.2%; } .c4 { width: 7.4%; } .c5 { width: 36.5%; } .c6 { width: 15%; }
```
